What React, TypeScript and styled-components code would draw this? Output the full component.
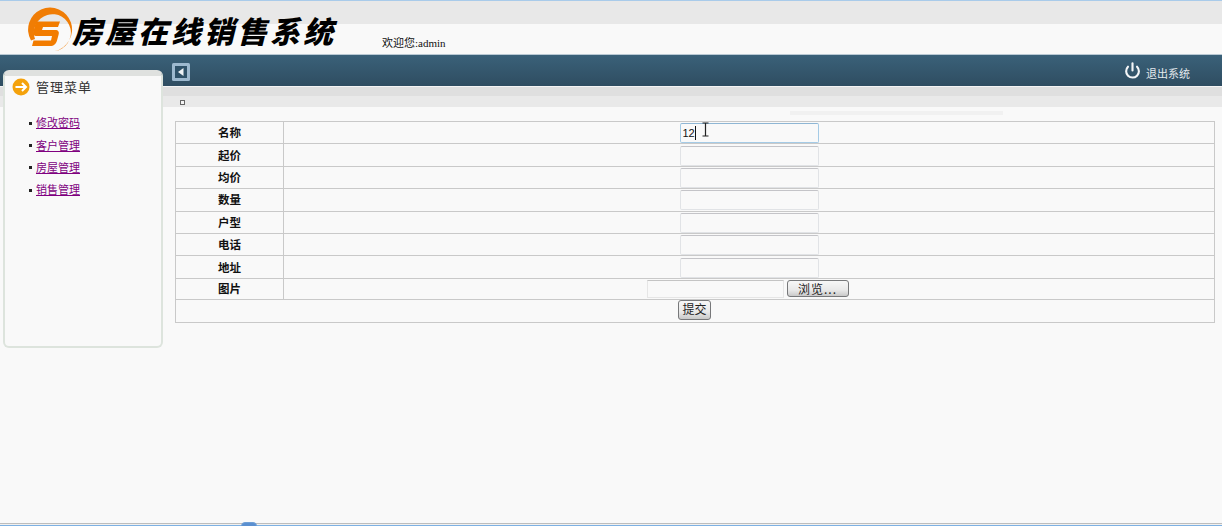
import React from "react";
import styled, { createGlobalStyle } from "styled-components";
import { Power } from "lucide-react";

const GlobalStyle = createGlobalStyle`
  html, body {
    margin: 0;
    padding: 0;
    background: #f9f9f9;
  }
  body {
    font-family: "Liberation Serif", "Noto Sans CJK SC", serif;
    font-size: 12px;
    color: #000;
  }
`;

const fields = ["名称", "起价", "均价", "数量", "户型", "电话", "地址"];
const menu = ["修改密码", "客户管理", "房屋管理", "销售管理"];

const Logo = () => (
  <svg width="46" height="46" viewBox="0 0 46 46">
    <path
      d="M3 33.5A22 22 0 1 1 27 44 18.5 18.5 0 1 0 7 32Z"
      fill="#f07d05"
    />
    <path
      d="M10 14.5H32L30 20H15L14 23H27C30.5 23 31.5 25 30.5 28L29 33.5C28 37 26 39 22 39H4L5.5 33.5H23L24 29H9C5.5 29 4.5 27 5.5 24L7 18C7.5 15.5 8.5 14.5 10 14.5Z"
      fill="#f27c00"
    />
  </svg>
);

const BackIcon = () => (
  <svg width="18" height="18" viewBox="0 0 18 18">
    <rect x="0" y="0" width="18" height="18" rx="1.5" fill="#9db9cf" />
    <rect x="3" y="3" width="12" height="12" fill="#2f5269" />
    <path d="M11.5 5V13L6 9Z" fill="#eef3f6" />
  </svg>
);

const ArrowIcon = () => (
  <svg width="18" height="18" viewBox="0 0 18 18">
    <circle cx="9" cy="9" r="8.5" fill="#f4a20c" />
    <path
      d="M3.5 9H14M10 5L14 9 10 13"
      stroke="#fff"
      strokeWidth="2"
      fill="none"
    />
  </svg>
);

const TextCursor = () => (
  <svg width="9" height="15" viewBox="0 0 9 15">
    <path
      d="M1.5 1H7.5M1.5 14H7.5M4.5 1V14"
      stroke="#222"
      strokeWidth="1.2"
      fill="none"
    />
  </svg>
);

const App = () => {
  return (
    <Page>
      <GlobalStyle />
      <Header>
        <LogoWrap>
          <Logo />
        </LogoWrap>
        <Title>房屋在线销售系统</Title>
        <Welcome>欢迎您:admin</Welcome>
      </Header>
      <TopBar>
        <CollapseButton>
          <BackIcon />
        </CollapseButton>
        <Logout>
          <Power size={17} strokeWidth={3} color="#f4f6f8" />
          <span>退出系统</span>
        </Logout>
      </TopBar>
      <Body>
        <Sidebar>
          <SidebarTitle>
            <ArrowIcon />
            <span>管理菜单</span>
          </SidebarTitle>
          <Menu>
            {menu.map((item) => (
              <li key={item}>
                <a href="#">{item}</a>
              </li>
            ))}
          </Menu>
        </Sidebar>
        <Content>
          <Crumb>
            <CrumbMark />
            <FaintBand />
          </Crumb>
          <FormTable>
            <colgroup>
              <col width="108" />
              <col />
            </colgroup>
            <tbody>
              {fields.map((label, i) => (
                <tr key={label}>
                  <LabelCell>{label}</LabelCell>
                  <ValueCell>
                    <InputWrap>
                      <TextInput
                        $active={i === 0}
                        defaultValue={i === 0 ? "12" : ""}
                      />
                      {i === 0 && (
                        <>
                          <Caret />
                          <CursorMark>
                            <TextCursor />
                          </CursorMark>
                        </>
                      )}
                    </InputWrap>
                  </ValueCell>
                </tr>
              ))}
              <ShortRow>
                <LabelCell>图片</LabelCell>
                <ValueCell>
                  <FileRow>
                    <FileInput />
                    <Button $wide>浏览...</Button>
                  </FileRow>
                </ValueCell>
              </ShortRow>
              <tr>
                <SubmitCell colSpan={2}>
                  <Button>提交</Button>
                </SubmitCell>
              </tr>
            </tbody>
          </FormTable>
        </Content>
      </Body>
      <Footer>
        <FooterTab />
      </Footer>
    </Page>
  );
};

const Page = styled.div`
  width: 1222px;
  height: 526px;
  display: flex;
  flex-direction: column;
  overflow: hidden;
  border-top: 1px solid #a9cbea;
  box-sizing: border-box;
`;

const Header = styled.header`
  height: 54px;
  flex: none;
  display: flex;
  align-items: flex-start;
  padding-left: 28px;
  box-sizing: border-box;
  background: linear-gradient(#e8e8e8 0, #e8e8e8 23px, #f9f9f9 23px);
  border-bottom: 1px solid #b9c9d4;
`;

const LogoWrap = styled.div`
  margin-top: 6px;
  height: 46px;
`;

const Title = styled.h1`
  margin: 8px 0 0 -2px;
  font-family: "Noto Sans CJK SC", sans-serif;
  font-size: 30px;
  line-height: 42px;
  font-weight: 900;
  font-style: italic;
  letter-spacing: 3px;
  color: #000;
  white-space: nowrap;
`;

const Welcome = styled.div`
  margin: 35px 0 0 46px;
  font-size: 11px;
  line-height: 15px;
  white-space: nowrap;
  color: #111;
`;

const TopBar = styled.div`
  height: 32px;
  flex: none;
  display: flex;
  align-items: flex-start;
  justify-content: space-between;
  padding: 7px 32px 0 172px;
  box-sizing: border-box;
  background: linear-gradient(#3a6179, #2f4d61);
  border-bottom: 1px solid #f4f4f4;
`;

const CollapseButton = styled.div`
  width: 18px;
  height: 18px;
  margin-top: 1px;
`;

const Logout = styled.div`
  display: flex;
  align-items: flex-start;
  gap: 5px;
  color: #e4e9ed;
  font-family: "Noto Sans CJK SC", sans-serif;
  font-size: 11px;
  line-height: 18px;
  span {
    margin-top: 2px;
  }
`;

const Body = styled.div`
  flex: 1;
  display: flex;
  align-items: flex-start;
  min-height: 0;
  background: linear-gradient(#dfdfdf 0, #dfdfdf 9px, #e9e9e9 9px, #e9e9e9 20px, #f9f9f9 20px);
`;

const Sidebar = styled.aside`
  width: 160px;
  height: 278px;
  flex: none;
  margin: -17px 0 0 3px;
  box-sizing: border-box;
  border: 2px solid #dde4dd;
  border-top: 6px solid #dfe1df;
  border-radius: 6px;
  background: #f9f9f9;
`;

const SidebarTitle = styled.div`
  display: flex;
  align-items: center;
  gap: 6px;
  padding: 2px 0 0 7px;
  font-family: "Noto Sans CJK SC", sans-serif;
  font-size: 13px;
  line-height: 18px;
  letter-spacing: 1px;
  color: #333;
`;

const Menu = styled.ul`
  margin: 0;
  padding: 15px 0 0 24px;
  list-style: none;
  font-family: "Noto Sans CJK SC", sans-serif;
  font-size: 11px;
  li {
    display: flex;
    align-items: center;
    gap: 4px;
    height: 22.4px;
    line-height: 18px;
  }
  li::before {
    content: "";
    width: 3px;
    height: 3px;
    margin-top: 2px;
    background: #222;
  }
  a {
    color: #800080;
  }
`;

const Content = styled.main`
  flex: 1;
  padding: 0 7px 0 12px;
  min-width: 0;
`;

const Crumb = styled.div`
  position: relative;
  height: 34px;
  padding: 13px 0 0 5px;
  box-sizing: border-box;
`;

const CrumbMark = styled.div`
  width: 3px;
  height: 3px;
  border: 1px solid #666;
  background: #f4f4f4;
`;

const FaintBand = styled.div`
  position: absolute;
  left: 615px;
  top: 24px;
  width: 213px;
  height: 4px;
  background: #f1f1f1;
`;

const FormTable = styled.table`
  width: 1040px;
  border-collapse: collapse;
  table-layout: fixed;
  font-family: "Noto Sans CJK SC", sans-serif;
  font-size: 11.5px;
  tr {
    height: 22.4px;
  }
`;

const ShortRow = styled.tr`
  && {
    height: 21.4px;
  }
`;

const LabelCell = styled.td`
  padding: 0 0 1px;
  border: 1px solid #c9c9c9;
  text-align: center;
  font-weight: 700;
  color: #111;
`;

const ValueCell = styled.td`
  padding: 0;
  border: 1px solid #c9c9c9;
  text-align: center;
`;

const SubmitCell = styled(ValueCell)`
  vertical-align: top;
  padding-right: 1px;
`;

const InputWrap = styled.div`
  position: relative;
  width: 139px;
  height: 20px;
  margin: 1px auto 0;
`;

const TextInput = styled.input<{ $active?: boolean }>`
  display: block;
  width: 100%;
  height: 100%;
  margin: 0;
  padding: 0 2px;
  box-sizing: border-box;
  border: 1px solid ${(p) => (p.$active ? "#a5cbe6" : "#e1e3e6")};
  border-top-color: ${(p) => (p.$active ? "#8fb6d4" : "#c4c4c8")};
  border-radius: 2px;
  background: #f9f9f9;
  font-family: "Liberation Sans", sans-serif;
  font-size: 11px;
  color: #111;
  outline: none;
`;

const Caret = styled.div`
  position: absolute;
  left: 15px;
  top: 3px;
  width: 1px;
  height: 14px;
  background: #111;
`;

const CursorMark = styled.div`
  position: absolute;
  left: 21px;
  top: -1px;
  line-height: 0;
`;

const FileRow = styled.div`
  display: flex;
  justify-content: center;
  align-items: center;
  gap: 3px;
  padding-right: 3px;
`;

const FileInput = styled.div`
  width: 137px;
  height: 18px;
  box-sizing: border-box;
  border: 1px solid #e6e6e6;
  border-top-color: #c4c4c4;
  background: #f9f9f9;
`;

const Button = styled.button<{ $wide?: boolean }>`
  width: ${(p) => (p.$wide ? "62px" : "33px")};
  height: ${(p) => (p.$wide ? "17px" : "20px")};
  margin: 0;
  padding: ${(p) => (p.$wide ? "0" : "0 0 3px")};
  box-sizing: border-box;
  border: 1px solid #77787a;
  border-radius: 3px;
  background: linear-gradient(#f7f7f7, #e9e9e9 60%, #c9c9c9);
  font-family: "Noto Sans CJK SC", sans-serif;
  font-size: 12px;
  line-height: 14px;
  letter-spacing: ${(p) => (p.$wide ? "1px" : "0")};
  color: #222;
`;

const Footer = styled.footer`
  position: relative;
  height: 3px;
  flex: none;
  box-sizing: border-box;
  border-top: 1px solid #bdbdbd;
  background: linear-gradient(#f0f0f0 0, #f0f0f0 1px, #7db1e3 1px);
`;

const FooterTab = styled.div`
  position: absolute;
  left: 241px;
  top: -2px;
  width: 16px;
  height: 5px;
  box-sizing: border-box;
  border: 1px solid #6f9fd6;
  border-radius: 4px 4px 0 0;
  background: #5a8fd0;
`;

export default App;
